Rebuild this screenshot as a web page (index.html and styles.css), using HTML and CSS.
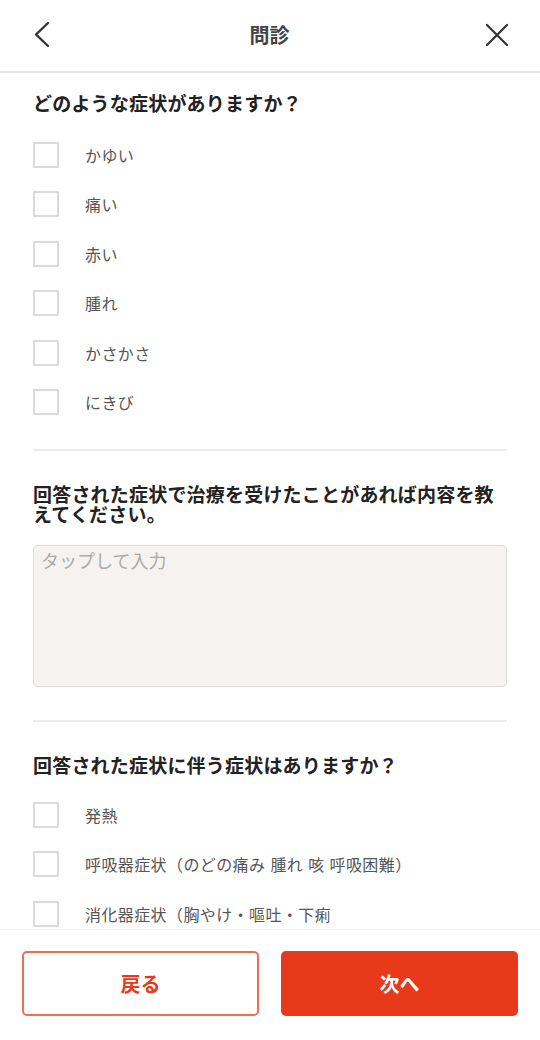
FILE: index.html
```html
<!DOCTYPE html>
<html lang="ja">
<head>
<meta charset="utf-8">
<title>問診</title>
<link rel="stylesheet" href="styles.css">
</head>
<body>
<div class="app">
  <header class="header">
    <button class="icon-btn back" aria-label="戻る">
      <svg width="26" height="30" viewBox="0 0 26 30"><polyline points="19,3 7,14.5 19,26" fill="none" stroke="#333" stroke-width="2.4" stroke-linecap="round" stroke-linejoin="round"/></svg>
    </button>
    <h1 class="title">問診</h1>
    <button class="icon-btn close" aria-label="閉じる">
      <svg width="26" height="26" viewBox="0 0 26 26"><path d="M3 3 L23 23 M23 3 L3 23" fill="none" stroke="#333" stroke-width="2.2" stroke-linecap="round"/></svg>
    </button>
  </header>

  <main class="content">
    <section class="section">
      <h2 class="question">どのような症状がありますか？</h2>
      <ul class="options">
        <li class="option"><span class="box"></span><span class="label">かゆい</span></li>
        <li class="option"><span class="box"></span><span class="label">痛い</span></li>
        <li class="option"><span class="box"></span><span class="label">赤い</span></li>
        <li class="option"><span class="box"></span><span class="label">腫れ</span></li>
        <li class="option"><span class="box"></span><span class="label">かさかさ</span></li>
        <li class="option"><span class="box"></span><span class="label">にきび</span></li>
      </ul>
    </section>
    <hr class="divider">
    <section class="section s2">
      <h2 class="question multi">回答された症状で治療を受けたことがあれば内容を教えてください。</h2>
      <div class="textarea">タップして入力</div>
    </section>
    <hr class="divider">
    <section class="section s3">
      <h2 class="question">回答された症状に伴う症状はありますか？</h2>
      <ul class="options o3">
        <li class="option"><span class="box"></span><span class="label">発熱</span></li>
        <li class="option"><span class="box"></span><span class="label">呼吸器症状（のどの痛み 腫れ 咳 呼吸困難）</span></li>
        <li class="option"><span class="box"></span><span class="label">消化器症状（胸やけ・嘔吐・下痢</span></li>
      </ul>
    </section>
  </main>

  <footer class="footer">
    <button class="btn btn-outline">戻る</button>
    <button class="btn btn-primary">次へ</button>
  </footer>
</div>
</body>
</html>
```

FILE: styles.css
```css
* { box-sizing: border-box; }
html, body {
  margin: 0;
  padding: 0;
  background: #fff;
  font-family: "Noto Sans CJK JP", "Noto Sans", sans-serif;
  color: #333;
}
.app {
  width: 540px;
  height: 1040px;
  display: flex;
  flex-direction: column;
  overflow: hidden;
}
.header {
  height: 73px;
  flex: none;
  display: flex;
  align-items: center;
  justify-content: space-between;
  padding: 0 28px 2px 27px;
  border-bottom: 2px solid #e6e6e6;
}
.icon-btn {
  background: none;
  border: 0;
  padding: 0;
  width: 30px;
  height: 30px;
  display: flex;
  align-items: center;
  justify-content: center;
}
.title {
  margin: 0;
  font-size: 20px;
  font-weight: 700;
  color: #444;
  line-height: 28px;
}
.content {
  flex: 1;
  overflow: hidden;
  padding: 18px 33px 0;
}
.question {
  margin: 0;
  font-size: 19px;
  letter-spacing: 0.2px;
  font-weight: 700;
  line-height: 24px;
  color: #222;
}
.question.multi {
  line-height: 20px;
}
.options {
  list-style: none;
  margin: 15px 0 0;
  padding: 0;
}
.option {
  height: 49.5px;
  display: flex;
  align-items: center;
}
.box {
  width: 26px;
  height: 26px;
  border: 2px solid #dadada;
  border-radius: 1px;
  flex: none;
}
.label {
  margin-left: 26px;
  font-size: 16px;
  letter-spacing: 0.4px;
  word-spacing: 1px;
  color: #555;
}
.divider {
  border: 0;
  border-top: 2px solid #ebebeb;
  margin: 22px 0 0;
}
.s2 { padding-top: 33px; }
.textarea {
  margin-top: 21px;
  height: 142px;
  background: #f5f2f1;
  border: 1px solid #dcdcdc;
  border-radius: 5px;
  padding: 1px 7px;
  font-size: 18px;
  color: #aaa;
  line-height: 26px;
}
.s2 + .divider { margin-top: 33px; }
.s3 { padding-top: 31px; }
.o3 { margin-top: 13px; }
.footer {
  flex: none;
  height: 111px;
  border-top: 1px solid #eeeeee;
  background: #fff;
  display: flex;
  gap: 22px;
  padding: 21px 22px 24px;
}
.btn {
  flex: 1;
  height: 65px;
  border-radius: 5px;
  font-family: inherit;
  font-size: 20px;
  font-weight: 700;
}
.btn-outline {
  background: #fff;
  border: 2px solid #ee6f58;
  color: #e8391a;
}
.btn-primary {
  background: #e8391a;
  border: 2px solid #e8391a;
  color: #fff;
}
```
